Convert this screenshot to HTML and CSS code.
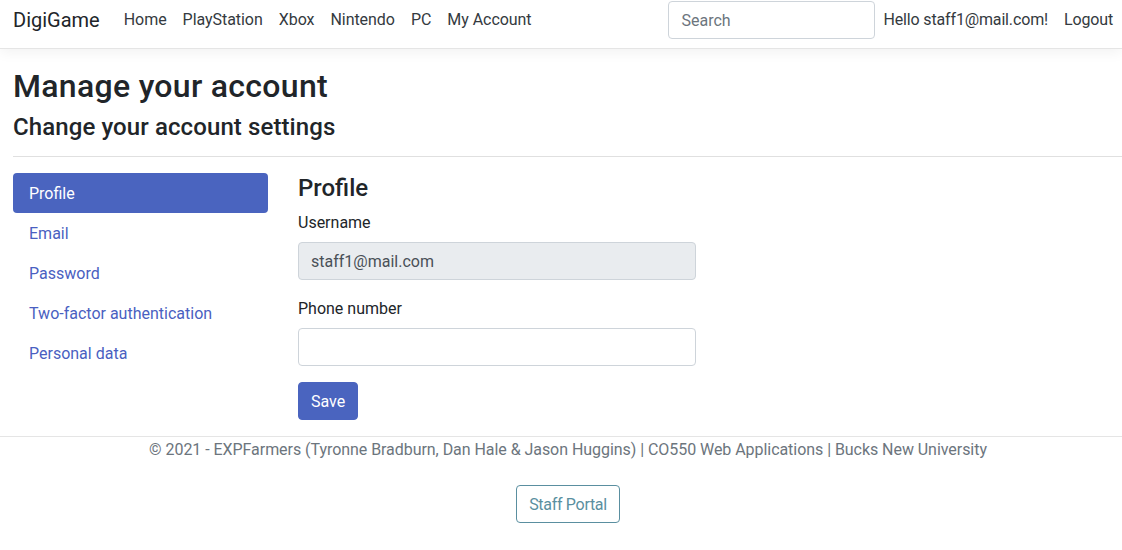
FILE: index.html
```html
<!DOCTYPE html>
<html lang="en">
<head>
<meta charset="utf-8">
<title>Manage your account - DigiGame</title>
<link rel="stylesheet" href="styles.css">
</head>
<body>
<header class="navbar">
  <a class="brand" href="#">DigiGame</a>
  <nav class="nav-main">
    <a class="nav-link" href="#">Home</a>
    <a class="nav-link" href="#">PlayStation</a>
    <a class="nav-link" href="#">Xbox</a>
    <a class="nav-link" href="#">Nintendo</a>
    <a class="nav-link" href="#">PC</a>
    <a class="nav-link" href="#">My Account</a>
  </nav>
  <input class="search" type="text" placeholder="Search">
  <a class="nav-link user-link" href="#">Hello staff1@mail.com!</a>
  <a class="nav-link user-link" href="#">Logout</a>
</header>

<main class="main">
  <h1 class="title">Manage your account</h1>
  <h2 class="subtitle">Change your account settings</h2>
  <hr class="rule">
  <div class="row">
    <aside class="side">
      <a class="pill active" href="#">Profile</a>
      <a class="pill" href="#">Email</a>
      <a class="pill" href="#">Password</a>
      <a class="pill" href="#">Two-factor authentication</a>
      <a class="pill" href="#">Personal data</a>
    </aside>
    <section class="content">
      <h4 class="section-title">Profile</h4>
      <div class="form-group">
        <label class="label">Username</label>
        <input class="control disabled" type="text" value="staff1@mail.com" disabled>
      </div>
      <div class="form-group">
        <label class="label">Phone number</label>
        <input class="control" type="text">
      </div>
      <button class="btn-save" type="button">Save</button>
    </section>
  </div>
</main>

<footer class="footer">
  <p class="copy">© 2021 - EXPFarmers (Tyronne Bradburn, Dan Hale &amp; Jason Huggins) | CO550 Web Applications | Bucks New University</p>
  <a class="btn-staff" href="#">Staff Portal</a>
</footer>
</body>
</html>
```
FILE: styles.css
```css
* { box-sizing: border-box; }
html, body { margin: 0; padding: 0; }
body {
  font-family: Roboto, "Noto Sans", "Liberation Sans", sans-serif;
  font-size: 16px;
  line-height: 24px;
  color: #212529;
  background: #fff;
}
a { text-decoration: none; }

.navbar {
  display: flex;
  align-items: center;
  height: 49px;
  padding: 0 1px 9px 13px;
  border-bottom: 1px solid #e5e5e5;
  box-shadow: 0 4px 12px rgba(0,0,0,0.05);
}
.brand {
  font-size: 20px;
  color: #212529;
  margin-right: 16px;
  line-height: 30px;
}
.nav-main { display: flex; flex: 1; }
.nav-link {
  color: #343a40;
  padding: 0 8px;
  white-space: nowrap;
  letter-spacing: -0.05px;
}
.user-link { letter-spacing: -0.15px; }
.search {
  width: 207px;
  height: 38px;
  margin-top: 1px;
  border: 1px solid #ced4da;
  border-radius: 4px;
  padding: 6px 12px;
  font: inherit;
  color: #495057;
}
.search::placeholder { color: #6c757d; }

.main { padding: 18px 0 0 13px; }
.title {
  margin: 0;
  font-size: 32px;
  line-height: 38px;
  font-weight: 500;
  letter-spacing: 0.3px;
}
.subtitle {
  margin: 8px 0 0;
  font-size: 24px;
  line-height: 29px;
  font-weight: 500;
  letter-spacing: 0.1px;
}
.rule {
  margin: 14px 0 16px;
  border: 0;
  border-top: 1px solid #e0e0e0;
  height: 0;
}
.row { display: flex; gap: 30px; }
.side { width: 255px; display: flex; flex-direction: column; }
.pill {
  display: block;
  padding: 9px 16px 7px;
  color: #4a5fc1;
  border-radius: 4px;
}
.pill.active { background: #4a64bf; color: #fff; }
.content { width: 398px; }
.section-title {
  margin: 0 0 8px;
  padding-top: 1px;
  height: 29px;
  font-size: 24px;
  line-height: 29px;
  font-weight: 500;
}
.form-group { margin-bottom: 16px; }
.label { display: block; margin-bottom: 8px; padding-top: 1px; height: 24px; }
.control {
  display: block;
  width: 100%;
  height: 38px;
  padding: 6px 12px;
  font: inherit;
  color: #495057;
  border: 1px solid #ced4da;
  border-radius: 4px;
  background: #fff;
}
.control.disabled { background: #e9ecef; color: #495057; }
.btn-save {
  height: 38px;
  padding: 7px 12px 5px;
  font: inherit;
  color: #fff;
  background: #4a64bf;
  border: 1px solid #4a64bf;
  border-radius: 4px;
  margin-bottom: 16px;
}

.footer {
  border-top: 1px solid #e5e5e5;
  display: flex;
  flex-direction: column;
  align-items: center;
  padding-left: 14px;
}
.copy {
  margin: 0 0 24px;
  padding-top: 1px;
  height: 24px;
  color: #6c757d;
  letter-spacing: -0.05px;
}
.btn-staff {
  display: inline-block;
  height: 38px;
  padding: 7px 12px 5px;
  color: #5a8fa0;
  border: 1px solid #5a8fa0;
  border-radius: 4px;
  letter-spacing: -0.3px;
}
```
